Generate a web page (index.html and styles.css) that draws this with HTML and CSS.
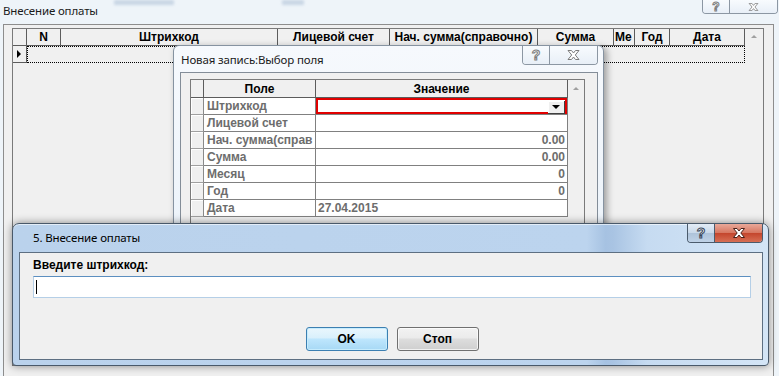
FILE: index.html
```html
<!DOCTYPE html>
<html lang="ru">
<head>
    <meta charset="UTF-8">
    <meta name="viewport" content="width=device-width, initial-scale=1.0">
    <title>Внесение оплаты</title>
    <link rel="stylesheet" href="styles.css">
</head>
<body>
    <div class="main">
        <div class="main-title">
            <span class="caption">Внесение оплаты</span>
            <span class="ghost ghost-a"></span>
            <span class="ghost ghost-b"></span>
            <div class="capbtns idle top-btns">
                <span class="cb cb-help"><span class="q">?</span></span>
                <span class="cb cb-close">
                    <svg width="13" height="10" viewBox="0 0 13 10"><polygon points="1,0.5 4.5,0.5 6.5,3 8.5,0.5 12,0.5 8.3,5 12,9.5 8.5,9.5 6.5,7 4.5,9.5 1,9.5 4.7,5" /></svg>
                </span>
            </div>
        </div>
        <div class="main-client">
            <div class="grid grid-main">
                <table class="tbl tbl-main">
                    <thead>
                        <tr>
                            <th class="w-ind"></th>
                            <th class="w-n">N</th>
                            <th class="w-bar">Штрихкод</th>
                            <th class="w-acc">Лицевой счет</th>
                            <th class="w-start">Нач. сумма(справочно)</th>
                            <th class="w-sum">Сумма</th>
                            <th class="w-mon">Ме</th>
                            <th class="w-year">Год</th>
                            <th class="w-date">Дата</th>
                        </tr>
                    </thead>
                    <tbody>
                        <tr>
                            <td class="ind"><span class="pointer"></span></td>
                            <td class="focus-row" colspan="8"></td>
                        </tr>
                    </tbody>
                </table>
                <div class="vscroll"><span class="up"></span></div>
            </div>
        </div>
    </div>

    <div class="win dlg-field">
        <div class="titlebar">
            <span class="caption">Новая запись:Выбор поля</span>
            <div class="capbtns idle">
                <span class="cb cb-help"><span class="q">?</span></span>
                <span class="cb cb-close">
                    <svg width="13" height="10" viewBox="0 0 13 10"><polygon points="1,0.5 4.5,0.5 6.5,3 8.5,0.5 12,0.5 8.3,5 12,9.5 8.5,9.5 6.5,7 4.5,9.5 1,9.5 4.7,5" /></svg>
                </span>
            </div>
        </div>
        <div class="client client-field">
            <div class="grid grid-field">
                <table class="tbl tbl-field">
                    <thead>
                        <tr>
                            <th class="f-ind"></th>
                            <th class="f-name">Поле</th>
                            <th class="f-val">Значение</th>
                        </tr>
                    </thead>
                    <tbody>
                        <tr>
                            <td class="ind"></td>
                            <td class="name">Штрихкод</td>
                            <td class="val sel"><div class="combo"><span class="drop"><span class="down"></span></span></div></td>
                        </tr>
                        <tr>
                            <td class="ind"></td>
                            <td class="name">Лицевой счет</td>
                            <td class="val"></td>
                        </tr>
                        <tr>
                            <td class="ind"></td>
                            <td class="name">Нач. сумма(справ</td>
                            <td class="val">0.00</td>
                        </tr>
                        <tr>
                            <td class="ind"></td>
                            <td class="name">Сумма</td>
                            <td class="val">0.00</td>
                        </tr>
                        <tr>
                            <td class="ind"></td>
                            <td class="name">Месяц</td>
                            <td class="val">0</td>
                        </tr>
                        <tr>
                            <td class="ind"></td>
                            <td class="name">Год</td>
                            <td class="val">0</td>
                        </tr>
                        <tr>
                            <td class="ind"></td>
                            <td class="name">Дата</td>
                            <td class="val val-left">27.04.2015</td>
                        </tr>
                    </tbody>
                </table>
                <div class="vscroll vscroll-field"><span class="up"></span></div>
            </div>
        </div>
    </div>

    <div class="win dlg-input">
        <div class="titlebar titlebar-active">
            <span class="caption">5. Внесение оплаты</span>
            <div class="capbtns active">
                <span class="cb cb-help"><span class="q">?</span></span>
                <span class="cb cb-close">
                    <svg width="14" height="10" viewBox="0 0 13 10"><polygon points="1,0.5 4.5,0.5 6.5,3 8.5,0.5 12,0.5 8.3,5 12,9.5 8.5,9.5 6.5,7 4.5,9.5 1,9.5 4.7,5" /></svg>
                </span>
            </div>
        </div>
        <div class="client client-input">
            <label class="prompt">Введите штрихкод:</label>
            <div class="textbox"><span class="caret"></span></div>
            <div class="buttons">
                <span class="btn btn-default">OK</span>
                <span class="btn">Стоп</span>
            </div>
        </div>
    </div>
</body>
</html>
```

FILE: styles.css
```css
body {
    margin: 0;
    width: 779px;
    height: 376px;
    overflow: hidden;
    position: relative;
    background-color: #eef4f9;
    font-family: "Liberation Sans", Arial, sans-serif;
    font-size: 12px;
    color: #000000;
}
.main {
    height: 376px;
    display: flex;
    flex-direction: column;
}
.main-title {
    height: 24px;
    display: flex;
    align-items: flex-start;
    padding-left: 3px;
}
.caption {
    font-family: "Noto Sans", sans-serif;
    font-size: 11.5px;
    letter-spacing: -0.15px;
    line-height: 21px;
    color: #1b1b1b;
    white-space: nowrap;
}
.ghost {
    height: 5px;
    background-color: #b8c9dc;
    filter: blur(1.5px);
    opacity: 0.7;
}
.ghost-a {
    width: 60px;
    margin-left: 16px;
}
.ghost-b {
    width: 22px;
    margin-left: 108px;
}

/* caption buttons */
.capbtns {
    display: flex;
    border: 1px solid #8c97a3;
    border-top: none;
    border-radius: 0 0 4px 4px;
    overflow: hidden;
    margin-left: auto;
}
.top-btns {
    margin-right: 1px;
}
.top-btns .cb {
    height: 13px;
}
.top-btns .q {
    font-size: 12px;
    line-height: 12px;
}
.top-btns svg {
    height: 8px;
}
.cb {
    height: 18px;
    display: flex;
    align-items: center;
    justify-content: center;
}
.cb-help {
    width: 26px;
    border-right: 1px solid #8c97a3;
}
.cb-close {
    width: 47px;
}
.q {
    font-family: "Liberation Sans", Arial, sans-serif;
    font-weight: bold;
    font-size: 14px;
    line-height: 14px;
    color: #ffffff;
    -webkit-text-stroke: 1px #7c7c7c;
}
.cb svg polygon {
    fill: #ffffff;
    stroke: #7c7c7c;
    stroke-width: 1;
}
.idle .cb {
    background: linear-gradient(#f8fbfe, #e8eff7);
}
.active {
    border-color: #4b5b6c;
}
.active .cb-help {
    border-right-color: #4b5b6c;
    background: linear-gradient(#e3ecf6, #c9d9ea 48%, #aec3da 52%, #bfd2e7);
}
.active .cb-close {
    background: linear-gradient(#e9a899, #d77862 48%, #c4462d 52%, #d76f55);
}
.active .q {
    -webkit-text-stroke: 1px #39475a;
}
.active .cb svg polygon {
    stroke: #4a2018;
}

/* main window */
.main-client {
    flex: 1;
    margin: 0 5px 0 3px;
    border: 1px solid #8d8d8d;
    border-bottom: none;
    background-color: #f0f0f0;
    padding: 3px 9px 0 8px;
    display: flex;
    flex-direction: column;
}
.grid {
    display: flex;
    align-items: flex-start;
    border: 1px solid #7a7a7a;
    background-color: #f0f0f0;
}
.grid-main {
    flex: 1;
    margin-bottom: 10px;
}
.tbl {
    border-collapse: separate;
    border-spacing: 0;
    table-layout: fixed;
}
.tbl th, .tbl td {
    box-sizing: border-box;
    padding: 0 2px;
    height: 17px;
    white-space: nowrap;
    overflow: hidden;
}
.tbl th {
    background-color: #f0f0f0;
    border-right: 1px solid #5c5c5c;
    border-bottom: 1px solid #5c5c5c;
    font-weight: bold;
    text-align: center;
}
.tbl-main {
    width: 732px;
}
.w-ind { width: 14px; }
.w-n { width: 34px; }
.w-bar { width: 217px; }
.w-acc { width: 112px; }
.w-start { width: 148px; }
.w-sum { width: 76px; }
.w-mon { width: 21px; text-align: left !important; padding-left: 1px !important; }
.w-year { width: 35px; }
.w-date { width: 75px; }
.tbl-main td.ind {
    border-right: 1px solid #5c5c5c;
    border-bottom: 1px solid #5c5c5c;
    padding: 0 0 0 4px;
}
.pointer {
    display: block;
    width: 0;
    height: 0;
    border-top: 4px solid transparent;
    border-bottom: 4px solid transparent;
    border-left: 4px solid #000000;
}
.focus-row {
    border: 1px dotted #000000;
}
.vscroll {
    width: 17px;
    display: flex;
    justify-content: center;
    padding-top: 6px;
}
.up {
    width: 0;
    height: 0;
    border-left: 3px solid transparent;
    border-right: 3px solid transparent;
    border-bottom: 3px solid #a0a0a0;
}

/* dialogs */
.win {
    position: absolute;
    box-sizing: border-box;
    display: flex;
    flex-direction: column;
}
.titlebar {
    height: 26px;
    display: flex;
    align-items: flex-start;
}
.titlebar .caption {
    padding: 6px 0 0 1px;
    line-height: 16px;
}
.client {
    flex: 1;
    background-color: #f0f0f0;
}
.dlg-field {
    left: 173px;
    top: 45px;
    width: 431px;
    height: 195px;
    border: 1px solid #8693a1;
    border-radius: 6px 6px 0 0;
    background: linear-gradient(#f6f9fd, #ecf3fa);
    padding: 0 5px 0 6px;
    box-shadow: 3px 2px 7px rgba(0, 0, 0, 0.35);
    z-index: 1;
}
.client-field {
    border: 1px solid #838d98;
    padding: 6px 13px 0 9px;
    display: flex;
}
.grid-field {
    flex: 1;
}
.tbl-field {
    width: 377px;
}
.tbl-field th {
    height: 18px;
}
.f-ind { width: 13px; }
.f-name { width: 112px; }
.f-val { width: 252px; }
.tbl-field td {
    background-color: #ffffff;
    border-right: 1px solid #808080;
    border-bottom: 1px solid #808080;
    color: #6d6d6d;
    font-weight: bold;
}
.tbl-field td.ind {
    background-color: #f0f0f0;
    border-right-color: #8a8a8a;
    border-bottom-color: #a0a0a0;
    box-shadow: inset 1px 1px #ffffff;
}
.tbl-field td.name {
    padding-left: 3px;
}
.tbl-field td.val {
    text-align: right;
}
.tbl-field td.val-left {
    text-align: left;
}
.tbl-field td.sel {
    padding: 0;
    box-shadow: inset 0 0 0 2px #e00000;
}
.combo {
    display: flex;
    justify-content: flex-end;
    padding: 2px 2px 0 0;
}
.drop {
    box-sizing: border-box;
    width: 17px;
    height: 13px;
    background-color: #f0f0f0;
    border-right: 1px solid #404040;
    border-bottom: 1px solid #404040;
    box-shadow: inset 1px 1px #ffffff;
    display: flex;
    align-items: center;
    justify-content: center;
}
.down {
    width: 0;
    height: 0;
    border-left: 4px solid transparent;
    border-right: 4px solid transparent;
    border-top: 4px solid #000000;
}
.vscroll-field {
    width: 16px;
    padding-top: 7px;
}

.dlg-input {
    left: 12px;
    top: 223px;
    width: 757px;
    height: 143px;
    border: 1px solid #49596a;
    border-radius: 7px 7px 4px 4px;
    background: linear-gradient(90deg, #bad2ec 0%, #bcd4ee 76%, #a6c2e2 78.5%, #a9c4e3 79.5%, #c6dbf1 84%, #d4e5f6 100%);
    padding: 0 5px 5px 6px;
    box-shadow: 0 0 8px rgba(0, 0, 0, 0.45), inset 0 1px rgba(255, 255, 255, 0.6);
    z-index: 2;
}
.titlebar-active {
    height: 28px;
}
.titlebar-active .caption {
    padding: 6px 0 0 14px;
    color: #000000;
}
.client-input {
    border: 1px solid #5d6f82;
    padding: 5px 11px 0 13px;
    display: flex;
    flex-direction: column;
}
.prompt {
    font-weight: bold;
    line-height: 14px;
    margin-bottom: 4px;
}
.textbox {
    box-sizing: border-box;
    height: 22px;
    background-color: #ffffff;
    border: 1px solid #b5cfe7;
    border-top-color: #5c8fc0;
    padding: 3px 2px;
}
.caret {
    display: block;
    width: 1px;
    height: 14px;
    background-color: #000000;
}
.buttons {
    display: flex;
    justify-content: center;
    gap: 9px;
    margin-top: 29px;
}
.btn {
    box-sizing: border-box;
    width: 82px;
    height: 24px;
    border: 1px solid #707070;
    border-radius: 3px;
    background: linear-gradient(#f2f2f2, #ebebeb 45%, #dddddd 50%, #cfcfcf);
    box-shadow: inset 0 0 0 1px rgba(255, 255, 255, 0.7);
    font-weight: bold;
    display: flex;
    align-items: center;
    justify-content: center;
}
.btn-default {
    border-color: #3c7fb1;
    background: linear-gradient(#eaf6fd, #d9f0fc 45%, #bee6fd 50%, #a7d9f5);
    box-shadow: inset 0 0 0 1px #c6ecfd;
}
```
